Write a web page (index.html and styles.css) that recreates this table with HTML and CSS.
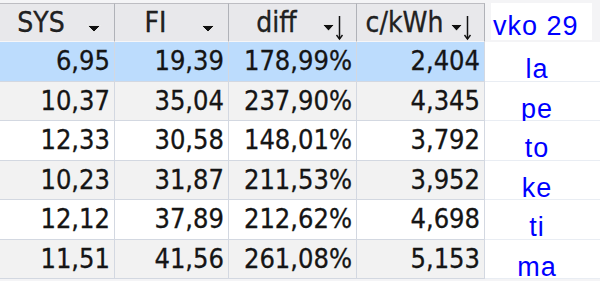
FILE: index.html
```html
<!DOCTYPE html>
<html>
<head>
<meta charset="utf-8">
<link rel="stylesheet" href="styles.css">
</head>
<body>
<div class="sheet">
  <table class="grid">
    <thead>
      <tr>
        <th class="c1"><div class="hd"><span class="lbl">SYS</span><svg class="ico" viewBox="0 0 36 38" width="36" height="38"><path d="M9.5 21.5h13l-6.5 6.5z" fill="#111" stroke="#fff" stroke-width="0.8"/></svg></div></th>
        <th class="c2"><div class="hd"><span class="lbl">FI</span><svg class="ico" viewBox="0 0 36 38" width="36" height="38"><path d="M9.5 21.5h13l-6.5 6.5z" fill="#111" stroke="#fff" stroke-width="0.8"/></svg></div></th>
        <th class="c3"><div class="hd"><span class="lbl">diff</span><svg class="ico" viewBox="0 0 36 38" width="36" height="38"><path d="M2.5 20.5h12l-6 6.5z" fill="#111" stroke="#fff" stroke-width="0.8"/><path d="M19.5 12v23" stroke="#111" stroke-width="1.5"/><path d="M16.5 31l3 4 3-4" fill="none" stroke="#111" stroke-width="1.4"/></svg></div></th>
        <th class="c4"><div class="hd"><span class="lbl">c/kWh</span><svg class="ico" viewBox="0 0 36 38" width="36" height="38"><path d="M2.5 20.5h12l-6 6.5z" fill="#111" stroke="#fff" stroke-width="0.8"/><path d="M19.5 12v23" stroke="#111" stroke-width="1.5"/><path d="M16.5 31l3 4 3-4" fill="none" stroke="#111" stroke-width="1.4"/></svg></div></th>
      </tr>
    </thead>
    <tbody>
      <tr class="sel"><td>6,95</td><td>19,39</td><td>178,99%</td><td>2,404</td></tr>
      <tr class="alt"><td>10,37</td><td>35,04</td><td>237,90%</td><td>4,345</td></tr>
      <tr><td>12,33</td><td>30,58</td><td>148,01%</td><td>3,792</td></tr>
      <tr class="alt"><td>10,23</td><td>31,87</td><td>211,53%</td><td>3,952</td></tr>
      <tr><td>12,12</td><td>37,89</td><td>212,62%</td><td>4,698</td></tr>
      <tr class="alt"><td>11,51</td><td>41,56</td><td>261,08%</td><td>5,153</td></tr>
    </tbody>
  </table>
  <div class="days">
    <div class="week"><span class="wbox">vko 29</span></div>
    <div class="day">la</div>
    <div class="day">pe</div>
    <div class="day">to</div>
    <div class="day">ke</div>
    <div class="day">ti</div>
    <div class="day">ma</div>
  </div>
</div>
</body>
</html>
```

FILE: styles.css
```css
html, body {
  margin: 0;
  padding: 0;
  background: #f4f4f6;
  width: 600px;
  height: 281px;
  overflow: hidden;
}

.sheet {
  display: flex;
  padding-top: 3px;
}

.grid {
  border-collapse: separate;
  border-spacing: 0;
  table-layout: fixed;
  width: 485px;
  font-family: "DejaVu Sans Condensed", "DejaVu Sans", sans-serif;
  font-stretch: condensed;
  font-size: 27px;
  color: #151515;
  -webkit-text-stroke: 0.3px #151515;
}

.grid th {
  padding: 0;
  height: 37px;
  background: #e8e8eb;
  border-top: 1px solid #bdbdc2;
  border-right: 1px solid #b0b2b8;
  border-bottom: 1px solid #f6f6f8;
  font-weight: normal;
  color: #222222;
}

.c1 { width: 114px; }
.c2 { width: 113px; }
.c3 { width: 127px; }
.c4 { width: 127px; }

.hd {
  display: flex;
  align-items: center;
  height: 37px;
}

.lbl {
  flex: 1;
  text-align: center;
  padding-left: 4px;
  line-height: 37px;
  font-size: 28px;
}

.ico {
  flex: none;
  display: block;
  -webkit-text-stroke: 0;
}

.grid td {
  height: 38.5px;
  padding: 0 4px 0 0;
  text-align: right;
  border-right: 1px solid #d3d8e1;
  border-bottom: 1px solid #d3d8e1;
  background: #ffffff;
  line-height: 30px;
  white-space: nowrap;
}

.grid tr.alt td { background: #f2f2f2; }
.grid tr.sel td { background: #bcdcfd; }

.days {
  width: 115px;
  display: flex;
  flex-direction: column;
  font-family: "Liberation Sans", Arial, sans-serif;
  font-size: 27px;
  letter-spacing: 1px;
  color: #0000ff;
}

.week {
  height: 39px;
  padding: 0 8px 0 6px;
  box-sizing: border-box;
}

.wbox {
  display: block;
  height: 37px;
  background: #ffffff;
  padding-left: 2px;
  line-height: 47px;
  overflow: hidden;
}

.day {
  box-sizing: border-box;
  height: 39.5px;
  padding: 16px 11px 0 0;
  background: #ffffff;
  border-bottom: 1px solid #e9edf3;
  text-align: center;
  line-height: 23px;
  white-space: nowrap;
}
```
